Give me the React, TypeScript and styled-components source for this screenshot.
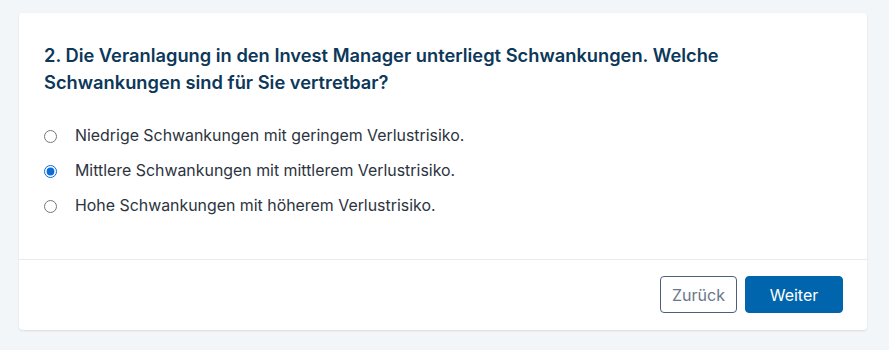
import styled, { createGlobalStyle } from 'styled-components';
import { useState } from 'react';

const GlobalStyle = createGlobalStyle`
  body {
    margin: 0;
    background: #f3f6f9;
    font-family: Inter, "Liberation Sans", sans-serif;
  }
`;

const options = [
  'Niedrige Schwankungen mit geringem Verlustrisiko.',
  'Mittlere Schwankungen mit mittlerem Verlustrisiko.',
  'Hohe Schwankungen mit höherem Verlustrisiko.',
];

function App() {
  const [selected, setSelected] = useState(1);

  return (
    <Page>
      <GlobalStyle />
      <Card>
        <Body>
          <Question>
            2. Die Veranlagung in den Invest Manager unterliegt Schwankungen. Welche
            Schwankungen sind für Sie vertretbar?
          </Question>
          <OptionList>
            {options.map((label, i) => (
              <Option key={label}>
                <Radio
                  type="radio"
                  name="risk"
                  checked={selected === i}
                  onChange={() => setSelected(i)}
                />
                <span>{label}</span>
              </Option>
            ))}
          </OptionList>
        </Body>
        <Footer>
          <Button $variant="outline">Zurück</Button>
          <Button $variant="primary">Weiter</Button>
        </Footer>
      </Card>
    </Page>
  );
}

export default App;

const Page = styled.div`
  padding: 13px 22px 20px 19px;
`;

const Card = styled.div`
  background: #fff;
  border-radius: 4px;
  box-shadow: 0 1px 2px rgba(30, 45, 60, 0.12);
`;

const Body = styled.div`
  padding: 29px 25px 42px;
  border-bottom: 1px solid #e8eaed;
`;

const Question = styled.h2`
  margin: 0 0 29px;
  font-size: 18.3px;
  font-weight: 600;
  line-height: 27px;
  color: #0d3859;
  max-width: 760px;
`;

const OptionList = styled.div`
  display: flex;
  flex-direction: column;
  gap: 13px;
`;

const Option = styled.label`
  display: flex;
  align-items: center;
  gap: 18px;
  font-size: 15.9px;
  line-height: 22px;
  color: #2c3440;
  cursor: pointer;
`;

const Radio = styled.input`
  margin: 0;
  width: 13px;
  height: 13px;
  accent-color: #0b6bd8;
`;

const Footer = styled.div`
  display: flex;
  justify-content: flex-end;
  gap: 8px;
  padding: 16px 24px 17px;
`;

const Button = styled.button<{ $variant: 'outline' | 'primary' }>`
  height: 37px;
  border-radius: 4px;
  font-family: Inter, "Liberation Sans", sans-serif;
  font-size: 16px;
  cursor: pointer;
  padding: 0;
  width: ${p => (p.$variant === 'primary' ? '98px' : '77px')};
  border: 1px solid ${p => (p.$variant === 'primary' ? '#0065ad' : '#4c6179')};
  background: ${p => (p.$variant === 'primary' ? '#0065ad' : '#fff')};
  color: ${p => (p.$variant === 'primary' ? '#fff' : '#6a7788')};
`;
